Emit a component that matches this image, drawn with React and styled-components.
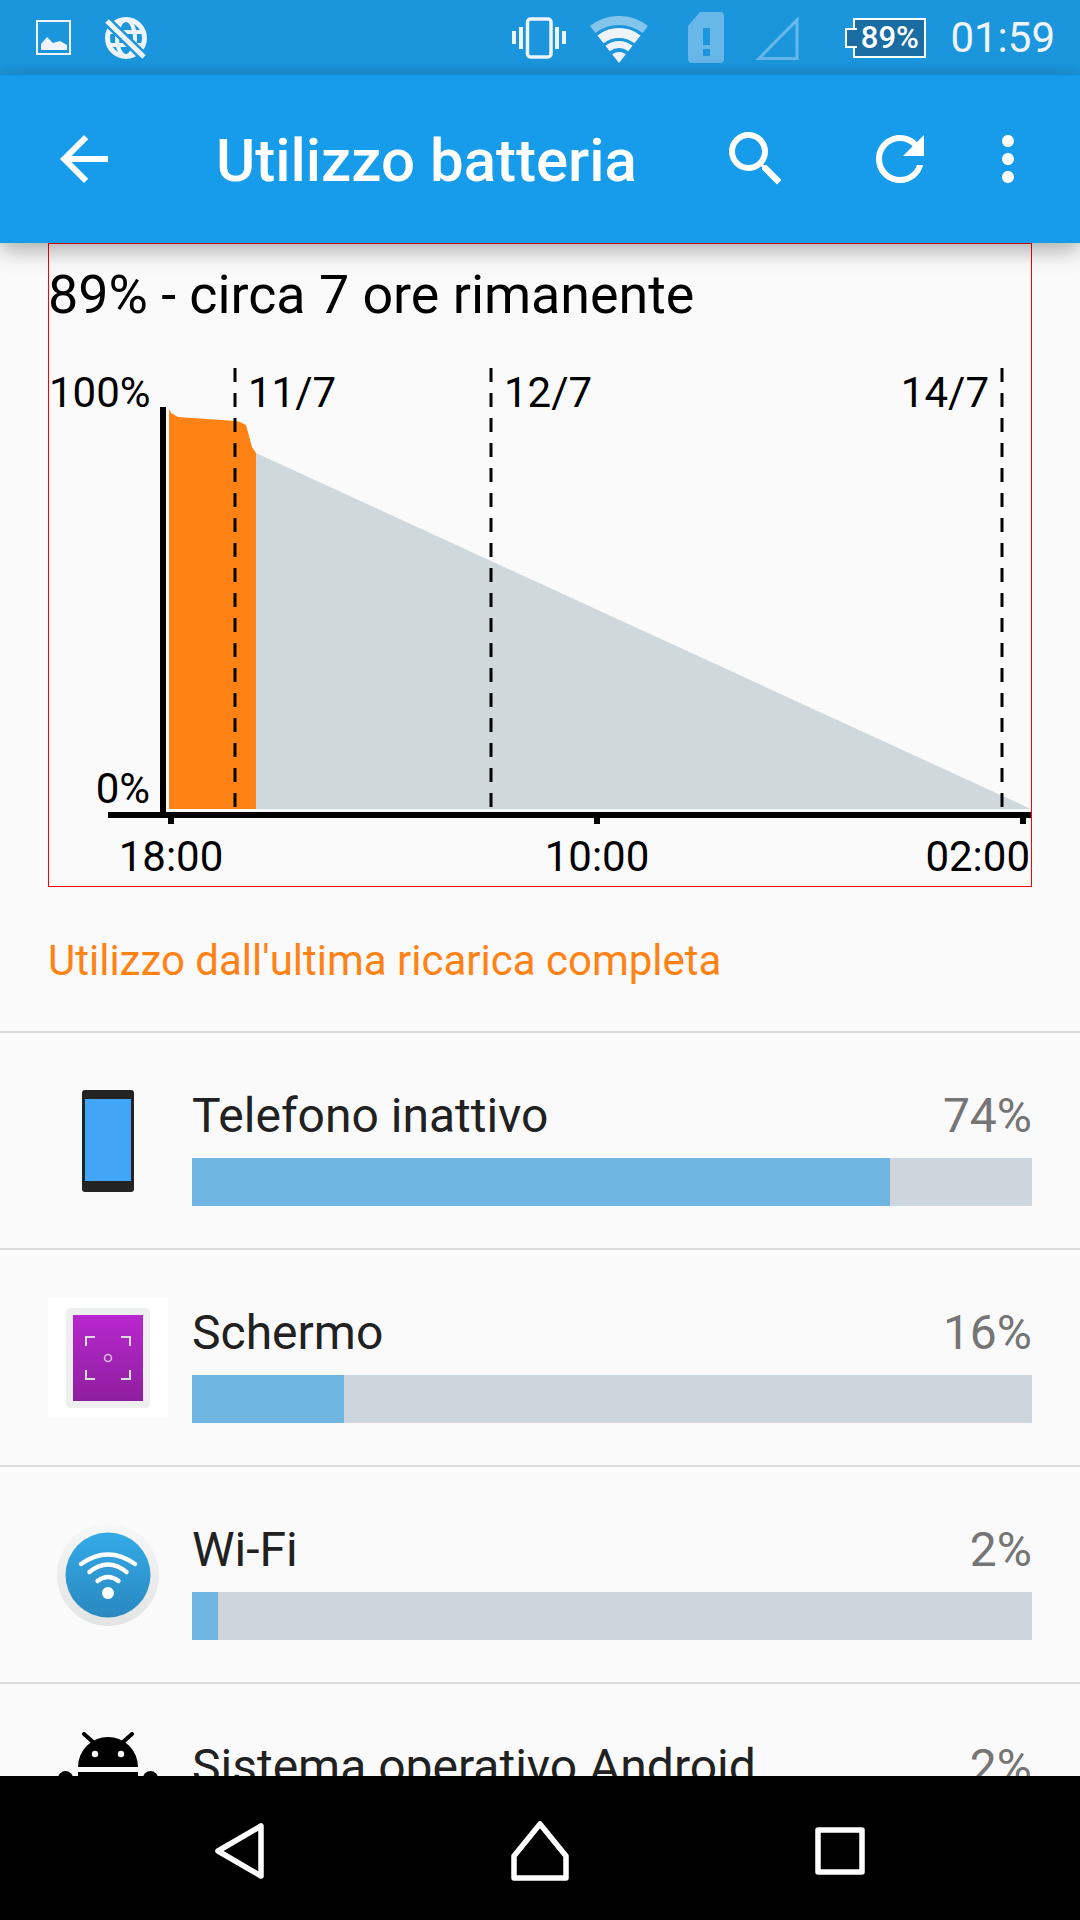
import React from "react";
import styled, { createGlobalStyle } from "styled-components";
import { MdArrowBack, MdSearch, MdRefresh, MdMoreVert } from "react-icons/md";

const GlobalStyle = createGlobalStyle`
  html, body {
    margin: 0;
    padding: 0;
    background: #fafafa;
  }
`;

const USAGE = [
  { name: "Telefono inattivo", percent: "74%", fill: 698, icon: "phone" },
  { name: "Schermo", percent: "16%", fill: 152, icon: "screen" },
  { name: "Wi-Fi", percent: "2%", fill: 26, icon: "wifi" },
  { name: "Sistema operativo Android", percent: "2%", fill: 26, icon: "android" },
];

const ImageIcon = () => (
  <svg width="35" height="35" viewBox="0 0 35 35">
    <rect x="1" y="1" width="33" height="33" fill="none" stroke="#eef4fa" strokeWidth="2" />
    <path d="M5 30V24L11 17L17 23L24 21L31 25V30Z" fill="#eef4fa" />
  </svg>
);

const GlobeOffIcon = () => (
  <svg width="42" height="42" viewBox="0 0 42 42">
    <circle cx="21" cy="21" r="18.5" fill="none" stroke="#eef4fa" strokeWidth="5" />
    <ellipse cx="21" cy="21" rx="9" ry="18" fill="none" stroke="#eef4fa" strokeWidth="4" />
    <path d="M3 15H39M3 28H39" stroke="#eef4fa" strokeWidth="4" />
    <path d="M2 4L39 40" stroke="#1b96dd" strokeWidth="10" />
    <path d="M2 4L39 40" stroke="#eef4fa" strokeWidth="5" />
  </svg>
);

const VibrateIcon = () => (
  <svg width="54" height="42" viewBox="0 0 54 42">
    <rect x="15.5" y="2" width="23.5" height="38" rx="3" fill="none" stroke="#eef4fa" strokeWidth="3.5" />
    <path d="M0 14H4V27H0ZM7 10H11V32H7ZM43 10H47V32H43ZM50 14H54V27H50Z" fill="#eef4fa" />
  </svg>
);

const WifiStatusIcon = () => (
  <WifiSvg width="58" height="48" viewBox="0 0 58 48" fill="none" stroke="#eef4fa">
    <path d="M2.8 13.5A42.5 42.5 0 0 1 55.2 13.5" strokeWidth="9" opacity="0.5" />
    <path d="M10.5 23.4A30 30 0 0 1 47.5 23.4" strokeWidth="10" />
    <path d="M17.6 32.4A18.5 18.5 0 0 1 40.4 32.4" strokeWidth="7" />
    <path d="M29 47L22.2 38.3A11 11 0 0 1 35.8 38.3Z" fill="#eef4fa" stroke="none" />
  </WifiSvg>
);

const SimIcon = () => (
  <svg width="36" height="51" viewBox="0 0 36 51">
    <path d="M12 0H32Q36 0 36 4V47Q36 51 32 51H4Q0 51 0 47V14Z" fill="#68b7e9" />
    <path d="M15 16H22V33H15ZM15 37H22V44H15Z" fill="#1b96dd" />
  </svg>
);

const SignalIcon = () => (
  <svg width="44" height="44" viewBox="0 0 44 44">
    <path d="M42 4V42.5H4Z" fill="none" stroke="#68b7e9" strokeWidth="3" />
  </svg>
);

const PhoneIcon = () => (
  <svg width="52" height="102" viewBox="0 0 52 102">
    <rect x="0" y="0" width="52" height="102" rx="3" fill="#232323" />
    <rect x="3" y="9" width="46" height="82" fill="#42a5f5" />
  </svg>
);

const ScreenIcon = () => (
  <svg width="120" height="120" viewBox="0 0 120 120">
    <defs>
      <linearGradient id="screenFill" x1="0" y1="0" x2="0" y2="1">
        <stop offset="0" stopColor="#b827cf" />
        <stop offset="1" stopColor="#8f1f9f" />
      </linearGradient>
    </defs>
    <rect width="120" height="120" fill="#ffffff" />
    <rect x="18" y="10" width="84" height="100" rx="4" fill="#eef0f0" />
    <rect x="25" y="17" width="70" height="86" fill="url(#screenFill)" />
    <path
      d="M38 48V39H47M73 39H82V48M38 72V81H47M73 81H82V72"
      fill="none"
      stroke="#dcdcdc"
      strokeWidth="2"
    />
    <circle cx="60" cy="60" r="3.5" fill="none" stroke="#d8c0dc" strokeWidth="1.5" />
  </svg>
);

const WifiBadgeIcon = () => (
  <svg width="120" height="120" viewBox="0 0 120 120">
    <defs>
      <linearGradient id="wifiFill" x1="0" y1="0" x2="0" y2="1">
        <stop offset="0" stopColor="#34aae8" />
        <stop offset="1" stopColor="#2a88bf" />
      </linearGradient>
      <linearGradient id="wifiRing" x1="0" y1="0" x2="0" y2="1">
        <stop offset="0" stopColor="#f6f7f7" />
        <stop offset="1" stopColor="#e2e3e3" />
      </linearGradient>
    </defs>
    <circle cx="60" cy="60" r="51" fill="url(#wifiRing)" />
    <circle cx="60" cy="60" r="42.5" fill="url(#wifiFill)" />
    <g fill="none" stroke="#ffffff" strokeLinecap="round" strokeWidth="4.5">
      <path d="M33 49Q60 30 87 49" />
      <path d="M41.5 57Q60 42 78.5 57" />
      <path d="M49.5 66Q60 58 70.5 66" />
    </g>
    <circle cx="60" cy="78" r="6" fill="#ffffff" />
  </svg>
);

const AndroidIcon = () => (
  <svg width="120" height="120" viewBox="0 0 120 120">
    <path d="M30 35A30 30 0 0 1 90 35Z" fill="#000" />
    <path d="M45 10L36 2M75 10L84 2" stroke="#000" strokeWidth="4" strokeLinecap="round" />
    <circle cx="47" cy="22" r="3.2" fill="#fafafa" />
    <circle cx="73" cy="22" r="3.2" fill="#fafafa" />
    <rect x="30" y="40" width="60" height="60" fill="#000" />
    <rect x="10" y="39" width="15" height="50" rx="7.5" fill="#000" />
    <rect x="95" y="39" width="15" height="50" rx="7.5" fill="#000" />
  </svg>
);

const ROW_ICONS = {
  phone: PhoneIcon,
  screen: ScreenIcon,
  wifi: WifiBadgeIcon,
  android: AndroidIcon,
};

const BatteryChart = () => (
  <ChartSvg viewBox="49 327 982 559">
    <path d="M256 453L1031 809H256Z" fill="#cfd8dc" />
    <path
      d="M169 409L171 413L178 417L236 421L240 422L246 425L252 447L256 453V809H169Z"
      fill="#ff8214"
    />
    <path
      d="M235 368V809M491 368V809M1002 368V809"
      stroke="#000"
      strokeWidth="3"
      strokeDasharray="14 11"
      fill="none"
    />
    <path
      d="M160 407H166V812H1031V818H108V812H160ZM168 818H174V824H168ZM594 818H600V824H594ZM1020 818H1026V824H1020Z"
      fill="#000"
    />
    <ChartLabel x="49" y="407">100%</ChartLabel>
    <ChartLabel x="150" y="803" textAnchor="end">0%</ChartLabel>
    <ChartLabel x="248" y="407">11/7</ChartLabel>
    <ChartLabel x="504" y="407">12/7</ChartLabel>
    <ChartLabel x="989" y="407" textAnchor="end">14/7</ChartLabel>
    <ChartLabel x="171" y="871" textAnchor="middle">18:00</ChartLabel>
    <ChartLabel x="597" y="871" textAnchor="middle">10:00</ChartLabel>
    <ChartLabel x="1030" y="871" textAnchor="end">02:00</ChartLabel>
  </ChartSvg>
);

const UsageRow = ({ name, percent, fill, icon }) => {
  const Icon = ROW_ICONS[icon];
  return (
    <Row>
      <RowIcon>
        <Icon />
      </RowIcon>
      <RowBody>
        <RowHead>
          <RowName>{name}</RowName>
          <RowPercent>{percent}</RowPercent>
        </RowHead>
        <Track>
          <Fill $width={fill} />
        </Track>
      </RowBody>
    </Row>
  );
};

export default function App() {
  return (
    <Screen>
      <GlobalStyle />
      <StatusBar>
        <StatusLeft>
          <ImageIcon />
          <GlobeOffIcon />
        </StatusLeft>
        <StatusRight>
          <VibrateIcon />
          <WifiStatusIcon />
          <SimSlot>
            <SimIcon />
          </SimSlot>
          <SignalSlot>
            <SignalIcon />
          </SignalSlot>
          <Battery>89%</Battery>
          <Clock>01:59</Clock>
        </StatusRight>
      </StatusBar>

      <Toolbar>
        <MdArrowBack size={72} />
        <ToolbarTitle>Utilizzo batteria</ToolbarTitle>
        <ToolbarActions>
          <MdSearch size={72} />
          <MdRefresh size={72} />
          <MdMoreVert size={72} />
        </ToolbarActions>
      </Toolbar>

      <Content>
        <ChartBox>
          <ChartTitle>89% - circa 7 ore rimanente</ChartTitle>
          <BatteryChart />
        </ChartBox>
        <SectionHeader>Utilizzo dall'ultima ricarica completa</SectionHeader>
        {USAGE.map((item) => (
          <UsageRow key={item.name} {...item} />
        ))}
      </Content>

      <NavBar>
        <svg width="50" height="56" viewBox="0 0 50 56">
          <path
            d="M46 3V53L3 28Z"
            fill="none"
            stroke="#fff"
            strokeWidth="5.5"
            strokeLinejoin="round"
          />
        </svg>
        <svg width="58" height="60" viewBox="0 0 58 60">
          <path
            d="M29 3L55 35V57H3V35Z"
            fill="none"
            stroke="#fff"
            strokeWidth="5.5"
            strokeLinejoin="round"
          />
        </svg>
        <svg width="50" height="48" viewBox="0 0 50 48">
          <rect
            x="3"
            y="3"
            width="44"
            height="42"
            fill="none"
            stroke="#fff"
            strokeWidth="5.5"
            strokeLinejoin="round"
          />
        </svg>
      </NavBar>
    </Screen>
  );
}

const Screen = styled.div`
  display: flex;
  flex-direction: column;
  width: 1080px;
  height: 1920px;
  overflow: hidden;
  background: #fafafa;
  font-family: Roboto, "Liberation Sans", sans-serif;
`;

const StatusBar = styled.div`
  display: flex;
  justify-content: space-between;
  align-items: center;
  flex-shrink: 0;
  height: 75px;
  padding: 0 25px 0 36px;
  box-sizing: border-box;
  background: #1b96dd;
`;

const StatusLeft = styled.div`
  display: flex;
  align-items: center;
  gap: 34px;
`;

const StatusRight = styled.div`
  display: flex;
  align-items: center;
  gap: 24px;
`;

const WifiSvg = styled.svg`
  margin-top: 5px;
`;

const SimSlot = styled.div`
  display: flex;
  margin-left: 16px;
`;

const SignalSlot = styled.div`
  display: flex;
  margin-left: 7px;
`;

const Battery = styled.div`
  position: relative;
  width: 73px;
  height: 40px;
  margin-left: 30px;
  border: 2px solid #ffffff;
  box-sizing: border-box;
  background: #1a6da3;
  color: #ffffff;
  font-size: 31px;
  font-weight: 500;
  line-height: 36px;
  text-align: center;

  &::before {
    content: "";
    position: absolute;
    left: -10px;
    top: 8px;
    width: 12px;
    height: 20px;
    border: 2px solid #ffffff;
    border-right: 0;
    box-sizing: border-box;
    background: #1a6da3;
  }
`;

const Clock = styled.div`
  color: #eef4fa;
  font-size: 42px;
  line-height: 48px;
`;

const Toolbar = styled.div`
  position: relative;
  z-index: 2;
  display: flex;
  align-items: center;
  flex-shrink: 0;
  height: 168px;
  padding: 0 36px 0 48px;
  box-sizing: border-box;
  background: #169ceb;
  color: #ffffff;
  box-shadow: 0 6px 22px rgba(0, 0, 0, 0.35);
`;

const ToolbarTitle = styled.div`
  margin-left: 96px;
  padding-top: 4px;
  font-size: 60px;
  font-weight: 500;
  line-height: 72px;
`;

const ToolbarActions = styled.div`
  display: flex;
  align-items: center;
  margin-left: auto;

  svg + svg {
    margin-left: 72px;
  }

  svg + svg + svg {
    margin-left: 36px;
  }
`;

const Content = styled.div`
  flex: 1;
  min-height: 0;
  overflow: hidden;
`;

const ChartBox = styled.div`
  display: flex;
  flex-direction: column;
  height: 644px;
  margin: 0 48px;
  border: 1px solid #ff0000;
  box-sizing: border-box;
`;

const ChartTitle = styled.div`
  flex-shrink: 0;
  height: 83px;
  padding-top: 19px;
  box-sizing: border-box;
  color: #000000;
  font-size: 53.8px;
  line-height: 64px;
  letter-spacing: -0.02px;
  text-indent: -1px;
`;

const ChartSvg = styled.svg`
  display: block;
  flex: 1;
  min-height: 0;
  width: 100%;
`;

const ChartLabel = styled.text`
  fill: #000000;
  font-size: 42px;
`;

const SectionHeader = styled.div`
  display: flex;
  align-items: center;
  height: 144px;
  padding: 2px 48px 0;
  box-sizing: border-box;
  color: #ff8214;
  font-size: 42px;
`;

const Row = styled.div`
  display: grid;
  grid-template-columns: 120px 1fr;
  column-gap: 24px;
  height: 217px;
  padding: 0 48px;
  border-top: 2px solid #dcdcdc;
  box-sizing: border-box;
`;

const RowIcon = styled.div`
  display: flex;
  justify-content: center;
  align-items: center;
  align-self: center;
  height: 120px;
`;

const RowBody = styled.div`
  padding-top: 55px;
`;

const RowHead = styled.div`
  display: flex;
  justify-content: space-between;
  height: 56px;
  line-height: 56px;
  font-size: 48px;
`;

const RowName = styled.span`
  color: #212121;
`;

const RowPercent = styled.span`
  color: #757575;
`;

const Track = styled.div`
  height: 48px;
  margin-top: 14px;
  background: #cdd6dc;
`;

const Fill = styled.div`
  width: ${(p) => p.$width}px;
  height: 100%;
  background: #6eb5e2;
`;

const NavBar = styled.div`
  position: relative;
  z-index: 2;
  display: grid;
  grid-template-columns: repeat(3, 300px);
  justify-items: center;
  align-items: center;
  flex-shrink: 0;
  height: 144px;
  padding: 6px 90px 0;
  box-sizing: border-box;
  background: #000000;
`;
